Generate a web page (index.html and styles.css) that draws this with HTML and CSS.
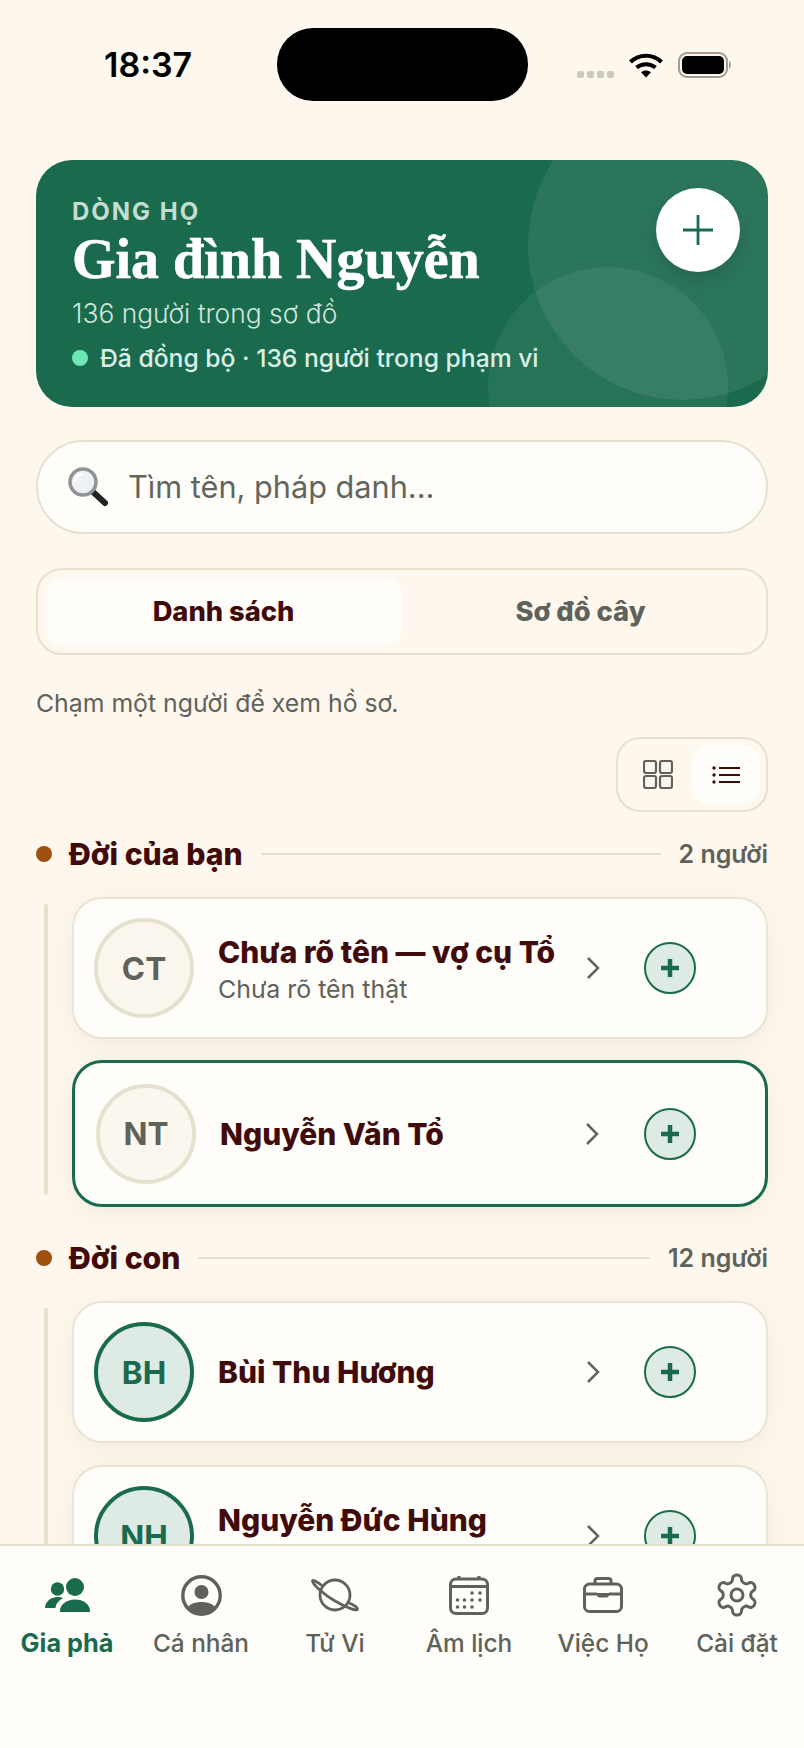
FILE: index.html
```html
<!DOCTYPE html>
<html lang="vi">
<head>
<meta charset="utf-8">
<title>Gia phả</title>
<link rel="stylesheet" href="styles.css">
</head>
<body>
<div class="screen">
  <header class="status">
    <div class="time">18:37</div>
    <div class="island"></div>
    <div class="sys">
      <div class="signal"><i></i><i></i><i></i><i></i></div>
      <svg class="wifi" viewBox="0 0 34 26"><path d="M1.500 10 C10 1.500 24 1.500 32.500 10" /><path d="M7.500 15.500 C13 11 21 11 26.500 15.500"/><path class="wifi-dot" d="M17 25.500 L12 20.300 C15 18 19 18 22 20.300 Z"/></svg>
      <svg class="battery" viewBox="0 0 54 26"><rect class="b-out" x="1" y="1" width="48" height="24" rx="8"/><rect class="b-in" x="4" y="4" width="42" height="18" rx="5"/><path class="b-nub" d="M51 9 C53.500 10 53.500 16 51 17 Z"/></svg>
    </div>
  </header>

  <main class="main">
    <section class="hero">
      <div class="blob blob-a"></div>
      <div class="blob blob-b"></div>
      <div class="hero-eyebrow">DÒNG HỌ</div>
      <h1 class="hero-title">Gia đình Nguyễn</h1>
      <div class="hero-sub">136 người trong sơ đồ</div>
      <div class="hero-sync"><span class="sync-dot"></span>Đã đồng bộ · 136 người trong phạm vi</div>
      <button class="hero-add" aria-label="Thêm"><svg viewBox="0 0 30 30"><path d="M15 0V30M0 15H30"/></svg></button>
    </section>

    <div class="search">
      <svg class="search-icon" viewBox="0 0 42 40">
        <path class="sg-handle" d="M24 24 L37 36" />
        <circle class="sg-lens" cx="15" cy="15" r="13"/>
        <path class="sg-shine" d="M7 14 C8 10 10 8 14 7"/>
      </svg>
      <span class="search-text">Tìm tên, pháp danh...</span>
    </div>

    <div class="tabs">
      <div class="tab tab-on">Danh sách</div>
      <div class="tab">Sơ đồ cây</div>
    </div>

    <p class="hint">Chạm một người để xem hồ sơ.</p>

    <div class="toggle-row">
      <div class="toggle">
        <div class="tg-btn">
          <svg class="tg-grid" viewBox="0 0 30 29"><rect x="1" y="1" width="12" height="12" rx="2"/><rect x="17" y="1" width="12" height="12" rx="2"/><rect x="1" y="16" width="12" height="12" rx="2"/><rect x="17" y="16" width="12" height="12" rx="2"/></svg>
        </div>
        <div class="tg-btn tg-on">
          <svg class="tg-list" viewBox="0 0 28 18"><path d="M7 2H28M7 9H28M7 16H28"/><circle cx="2" cy="2" r="1.700"/><circle cx="2" cy="9" r="1.700"/><circle cx="2" cy="16" r="1.700"/></svg>
        </div>
      </div>
    </div>

    <div class="gen-head">
      <span class="gen-dot"></span><span class="gen-title">Đời của bạn</span><span class="gen-line"></span><span class="gen-count">2 người</span>
    </div>
    <div class="group">
      <div class="rail"></div>
      <div class="list">
        <article class="card">
          <div class="avatar">CT</div>
          <div class="info"><div class="name">Chưa rõ tên — vợ cụ Tổ</div><div class="sub">Chưa rõ tên thật</div></div>
          <svg class="chev" viewBox="0 0 14 24"><path d="M2 2L12 12L2 22"/></svg>
          <div class="add"><svg viewBox="0 0 20 20"><path d="M10 1V19M1 10H19"/></svg></div>
        </article>
        <article class="card card-sel">
          <div class="avatar">NT</div>
          <div class="info"><div class="name">Nguyễn Văn Tổ</div></div>
          <svg class="chev" viewBox="0 0 14 24"><path d="M2 2L12 12L2 22"/></svg>
          <div class="add"><svg viewBox="0 0 20 20"><path d="M10 1V19M1 10H19"/></svg></div>
        </article>
      </div>
    </div>

    <div class="gen-head gen-next">
      <span class="gen-dot"></span><span class="gen-title">Đời con</span><span class="gen-line"></span><span class="gen-count">12 người</span>
    </div>
    <div class="group">
      <div class="rail"></div>
      <div class="list list-wide">
        <article class="card">
          <div class="avatar avatar-g">BH</div>
          <div class="info"><div class="name">Bùi Thu Hương</div></div>
          <svg class="chev" viewBox="0 0 14 24"><path d="M2 2L12 12L2 22"/></svg>
          <div class="add"><svg viewBox="0 0 20 20"><path d="M10 1V19M1 10H19"/></svg></div>
        </article>
        <article class="card">
          <div class="avatar avatar-g">NH</div>
          <div class="info"><div class="name">Nguyễn Đức Hùng</div><div class="sub">&nbsp;</div></div>
          <svg class="chev" viewBox="0 0 14 24"><path d="M2 2L12 12L2 22"/></svg>
          <div class="add"><svg viewBox="0 0 20 20"><path d="M10 1V19M1 10H19"/></svg></div>
        </article>
      </div>
    </div>
  </main>

  <nav class="nav">
    <div class="nav-item nav-on">
      <span class="nav-icon">
        <svg class="ic-people" viewBox="0 0 45 34"><circle cx="12.500" cy="11" r="6.700"/><circle cx="30" cy="9" r="9"/><path d="M0 29C1 23 6 19 13 19C15 19 17 19.500 18 20C13 23 11 26 10.500 30L2 30C0.500 30 0 30 0 29Z"/><path d="M15 34C14.500 27 21 21.500 30 21.500C39 21.500 45.500 27 45 34Z"/></svg>
      </span>
      <span class="nav-label">Gia phả</span>
    </div>
    <div class="nav-item">
      <span class="nav-icon">
        <svg class="ic-person" viewBox="0 0 41 41"><circle class="p-ring" cx="20.500" cy="20.500" r="18.700"/><circle class="p-fill" cx="20.500" cy="17" r="7"/><path class="p-fill" d="M6 33C9 29 14 27 20.500 27C27 27 32 29 35 33C31 37.500 26 39.500 20.500 39.500C15 39.500 10 37.500 6 33Z"/></svg>
      </span>
      <span class="nav-label">Cá nhân</span>
    </div>
    <div class="nav-item">
      <span class="nav-icon">
        <svg class="ic-line ic-planet" viewBox="0 0 48 34"><circle cx="24" cy="17" r="15"/><path d="M11 7.500C5 3 1.500 1.500 1.500 3C1.500 6 12 16 24 23C36 30 46.500 33.500 46.500 31C46.500 29.500 42 26.500 37 24.500"/></svg>
      </span>
      <span class="nav-label">Tử Vi</span>
    </div>
    <div class="nav-item">
      <span class="nav-icon">
        <svg class="ic-line ic-cal" viewBox="0 0 40 40"><rect x="1.500" y="4" width="37" height="34.500" rx="5.500"/><path d="M1.500 11.500H38.500M10 1V4M30 1V4"/><g class="dots"><circle cx="23" cy="18" r="1.800"/><circle cx="31" cy="18" r="1.800"/><circle cx="8.500" cy="25" r="1.800"/><circle cx="15.500" cy="25" r="1.800"/><circle cx="23" cy="25" r="1.800"/><circle cx="31" cy="25" r="1.800"/><circle cx="8.500" cy="32" r="1.800"/><circle cx="15.500" cy="32" r="1.800"/><circle cx="23" cy="32" r="1.800"/></g></svg>
      </span>
      <span class="nav-label">Âm lịch</span>
    </div>
    <div class="nav-item">
      <span class="nav-icon">
        <svg class="ic-line ic-case" viewBox="0 0 40 36"><rect x="1.500" y="7" width="37" height="27.500" rx="5"/><path d="M12 7V4C12 2.500 13 1.500 14.500 1.500H25.500C27 1.500 28 2.500 28 4V7M1.500 17H14M26 17H38.500"/><path class="latch" d="M14 16H26V18C26 19.500 25 20.500 23.500 20.500H16.500C15 20.500 14 19.500 14 18Z"/></svg>
      </span>
      <span class="nav-label">Việc Họ</span>
    </div>
    <div class="nav-item">
      <span class="nav-icon">
        <svg class="ic-line ic-gear" viewBox="0 0 24 24"><path d="M12.220 2h-.44a2 2 0 0 0-2 2v.18a2 2 0 0 1-1 1.730l-.43.25a2 2 0 0 1-2 0l-.15-.08a2 2 0 0 0-2.730.73l-.22.38a2 2 0 0 0 .73 2.730l.15.1a2 2 0 0 1 1 1.720v.51a2 2 0 0 1-1 1.740l-.15.09a2 2 0 0 0-.73 2.730l.22.38a2 2 0 0 0 2.730.73l.15-.08a2 2 0 0 1 2 0l.43.25a2 2 0 0 1 1 1.730V20a2 2 0 0 0 2 2h.44a2 2 0 0 0 2-2v-.18a2 2 0 0 1 1-1.730l.43-.25a2 2 0 0 1 2 0l.15.08a2 2 0 0 0 2.730-.73l.22-.39a2 2 0 0 0-.73-2.730l-.15-.08a2 2 0 0 1-1-1.740v-.5a2 2 0 0 1 1-1.740l.15-.09a2 2 0 0 0 .73-2.730l-.22-.38a2 2 0 0 0-2.730-.73l-.15.08a2 2 0 0 1-2 0l-.43-.25a2 2 0 0 1-1-1.730V4a2 2 0 0 0-2-2z"/><circle cx="12" cy="12" r="3"/></svg>
      </span>
      <span class="nav-label">Cài đặt</span>
    </div>
  </nav>
</div>
</body>
</html>
```

FILE: styles.css
```css
* { box-sizing: border-box; }
html, body { margin: 0; padding: 0; }
body { background: #fdf7ed; font-family: Inter, "Noto Sans", sans-serif; color: #5f625a; }
.screen { width: 804px; height: 1748px; display: flex; flex-direction: column; overflow: hidden; background: #fdf7ed; }

/* status bar */
.status { flex: none; height: 160px; display: grid; grid-template-columns: 277px 251px 1fr; align-items: start; padding-top: 28px; }
.time { padding: 17px 0 0 104px; font-size: 34px; line-height: 40px; font-weight: 600; color: #000; }
.island { height: 73px; border-radius: 36px; background: #000; }
.sys { display: flex; align-items: flex-start; padding: 24px 0 0 49px; }
.signal { display: flex; gap: 3px; margin-top: 19px; }
.signal i { display: block; width: 7px; height: 7px; border-radius: 2px; background: #ccc9bd; }
.wifi { width: 34px; height: 26px; margin-left: 15px; fill: none; stroke: #000; stroke-width: 4; }
.wifi-dot { fill: #000; stroke: none; }
.battery { width: 54px; height: 26px; margin-left: 15px; }
.b-out { fill: none; stroke: #a09c90; stroke-width: 2; }
.b-in { fill: #000; }
.b-nub { fill: #a09c90; }

/* main */
.main { flex: 1; min-height: 0; overflow: hidden; padding: 0 36px; }

/* hero */
.hero { position: relative; height: 247px; overflow: hidden; border-radius: 36px; background: #1a6b4e; padding: 38px 36px 0; color: #fff; }
.blob { position: absolute; border-radius: 50%; }
.blob-a { left: 492px; top: -70px; width: 310px; height: 310px; background: rgba(255,255,255,0.08); }
.blob-b { left: 452px; top: 107px; width: 240px; height: 240px; background: rgba(255,255,255,0.06); }
.hero-eyebrow { position: relative; font-size: 24px; line-height: 28px; font-weight: 700; letter-spacing: 2px; color: #c5ddd0; }
.hero-title { position: relative; margin: 3px 0 0; font-family: "Liberation Serif", serif; font-size: 56px; line-height: 60px; font-weight: 700; color: #fff; -webkit-text-stroke: 0.6px #fff; }
.hero-sub { position: relative; margin-top: 8px; font-size: 26.400px; line-height: 32px; font-weight: 300; color: #d3e5dc; }
.hero-sync { position: relative; display: flex; align-items: center; gap: 12px; margin-top: 14px; font-size: 24.700px; line-height: 30px; font-weight: 500; color: #dcefe6; }
.sync-dot { width: 16px; height: 16px; border-radius: 50%; background: #6ee7b7; }
.hero-add { position: absolute; top: 28px; right: 28px; display: flex; align-items: center; justify-content: center; width: 84px; height: 84px; padding: 0; border: 0; border-radius: 50%; background: #fff; box-shadow: 0 8px 20px rgba(0,0,0,0.14); }
.hero-add svg { width: 30px; height: 30px; fill: none; stroke: #1a6b4e; stroke-width: 2.800; }

/* search */
.search { display: flex; align-items: center; height: 94px; margin-top: 33px; padding-left: 30px; border: 2px solid #e6e1cf; border-radius: 47px; background: #fefdf9; }
.search-icon { width: 42px; height: 40px; flex: none; }
.sg-handle { fill: none; stroke: #222; stroke-width: 6; stroke-linecap: round; }
.sg-lens { fill: #eef0f2; stroke: #8f9397; stroke-width: 3.500; }
.sg-shine { fill: none; stroke: #fff; stroke-width: 2.500; stroke-linecap: round; }
.search-text { margin-left: 18px; font-size: 30.700px; line-height: 40px; font-weight: 400; color: #62655d; }

/* tabs */
.tabs { display: grid; grid-template-columns: 1fr 1fr; height: 87px; margin-top: 34px; padding: 8px 7px; border: 2px solid #e6e1cf; border-radius: 26px; background: #fdf7ed; }
.tab { display: flex; align-items: center; justify-content: center; border-radius: 18px; font-size: 27.300px; font-weight: 800; color: #5f625a; }
.tab-on { background: #fefdf9; color: #420b0b; box-shadow: 0 0 6px rgba(255,255,255,0.7); }

/* hint */
.hint { margin: 33px 0 0; font-size: 24.800px; line-height: 30px; font-weight: 400; color: #5f625a; }

/* view toggle */
.toggle-row { display: flex; justify-content: flex-end; margin-top: 19px; }
.toggle { display: flex; width: 152px; height: 75px; padding: 6px; border: 2px solid #e6e1cf; border-radius: 24px; }
.tg-btn { flex: 1; display: flex; align-items: center; justify-content: center; border-radius: 16px; }
.tg-on { flex: none; width: 68px; background: #fefdf9; }
.tg-grid { width: 30px; height: 29px; fill: none; stroke: #5f625a; stroke-width: 2.200; }
.tg-list { width: 28px; height: 18px; fill: #420b0b; }
.tg-list path { fill: none; stroke: #420b0b; stroke-width: 2.200; }

/* generation heading */
.gen-head { display: flex; align-items: center; height: 34px; margin-top: 25px; }
.gen-next { margin-top: 34px; }
.gen-dot { width: 16px; height: 16px; flex: none; border-radius: 50%; background: #a0500f; }
.gen-title { margin-left: 17px; font-size: 30.200px; line-height: 34px; font-weight: 800; color: #420b0b; }
.gen-line { flex: 1; height: 2px; margin: 0 18px; background: #e6e1cf; }
.gen-count { font-size: 25px; font-weight: 600; color: #5f625a; }

/* people */
.group { display: flex; margin-top: 26px; }
.rail { flex: none; width: 4px; margin: 7px 24px 12px 8px; border-radius: 2px; background: #e6e1cf; }
.list { flex: 1; display: flex; flex-direction: column; gap: 21px; }
.list-wide { gap: 22px; }
.card { display: flex; align-items: center; height: 142px; flex: none; padding-left: 20px; border: 2px solid #e9e4d3; border-radius: 30px; background: #fefdf9; box-shadow: 0 6px 26px rgba(90,80,40,0.07); }
.card-sel { height: 147px; padding-left: 21px; border: 3px solid #1a6b4e; }
.avatar { flex: none; display: flex; align-items: center; justify-content: center; width: 100px; height: 100px; border: 4px solid #e6e1cf; border-radius: 50%; background: #fcf7ee; font-size: 31.500px; font-weight: 700; color: #5f625a; }
.avatar-g { border-color: #1a6b4e; background: #deebe5; color: #1a6b4e; }
.info { flex: 1; min-width: 0; margin-left: 24px; }
.name { font-size: 30px; line-height: 36px; font-weight: 800; color: #420b0b; white-space: nowrap; }
.sub { font-size: 24.900px; line-height: 32px; font-weight: 400; color: #5f625a; margin: 3px 0 -3px; }
.chev { flex: none; width: 14px; height: 24px; fill: none; stroke: #63665e; stroke-width: 2.500; }
.add { flex: none; display: flex; align-items: center; justify-content: center; width: 52px; height: 52px; margin: 0 70px 0 44px; border: 2px solid #1a6b4e; border-radius: 50%; background: #deebe5; }
.card-sel .add { margin: 0 69px 0 45px; }
.add svg { width: 20px; height: 20px; fill: none; stroke: #1a6b4e; stroke-width: 4.500; }

/* bottom nav */
.nav { flex: none; display: grid; grid-template-columns: repeat(6, 1fr); height: 204px; border-top: 2px solid #e6e1cf; background: #fefdf9; padding-top: 28px; }
.nav-item { display: flex; flex-direction: column; align-items: center; }
.nav-icon { display: flex; align-items: center; justify-content: center; height: 42px; }
.nav-label { margin-top: 12px; font-size: 24.400px; line-height: 30px; font-weight: 500; color: #5f625a; white-space: nowrap; }
.nav-on .nav-label { font-size: 25.300px; font-weight: 700; color: #1a6b4e; }
.ic-people { width: 45px; height: 34px; fill: #1a6b4e; }
.ic-person { width: 41px; height: 41px; }
.p-ring { fill: none; stroke: #5f625a; stroke-width: 3.400; }
.p-fill { fill: #5f625a; }
.ic-line { fill: none; stroke: #5f625a; stroke-width: 3; }
.ic-planet { width: 48px; height: 34px; stroke-width: 2.800; }
.ic-cal { width: 40px; height: 40px; }
.dots circle { fill: #5f625a; stroke: none; }
.ic-case { width: 40px; height: 36px; }
.latch { fill: #5f625a; stroke: none; }
.ic-gear { width: 48px; height: 48px; stroke-width: 1.500; }
```
